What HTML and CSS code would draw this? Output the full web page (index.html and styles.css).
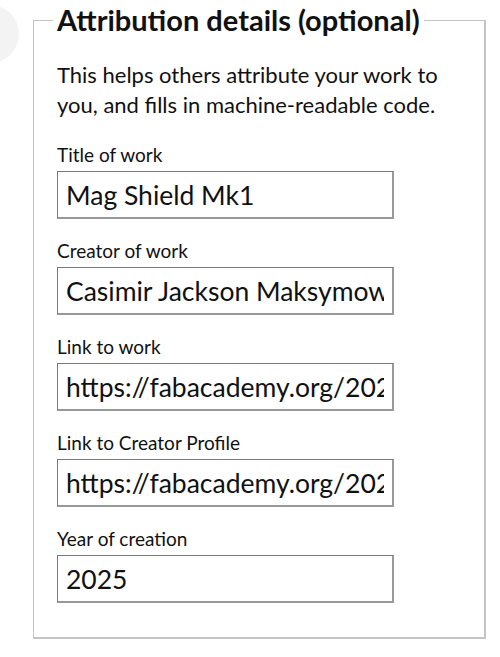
FILE: index.html
```html
<!DOCTYPE html>
<html lang="en">
<head>
    <meta charset="UTF-8">
    <meta name="viewport" content="width=device-width, initial-scale=1.0">
    <title>Attribution details</title>
    <link rel="stylesheet" href="styles.css">
</head>
<body>

    <div class="blob"></div>

    <form class="attribution">
        <fieldset>
            <legend>Attribution details (optional)</legend>

            <p class="hint">This helps others attribute your work to you, and fills in machine-readable code.</p>

            <div class="field">
                <label for="title">Title of work</label>
                <input type="text" id="title" value="Mag Shield Mk1">
            </div>

            <div class="field">
                <label for="creator">Creator of work</label>
                <input type="text" id="creator" value="Casimir Jackson Maksymowicz">
            </div>

            <div class="field">
                <label for="work_link">Link to work</label>
                <input type="text" id="work_link" value="https://fabacademy.org/2025/labs/">
            </div>

            <div class="field">
                <label for="profile_link">Link to Creator Profile</label>
                <input type="text" id="profile_link" value="https://fabacademy.org/2025/labs/">
            </div>

            <div class="field">
                <label for="year">Year of creation</label>
                <input type="text" id="year" value="2025">
            </div>
        </fieldset>
    </form>

</body>
</html>
```

FILE: styles.css
```css
body {
    font-family: Lato, "Noto Sans", sans-serif;
    margin: 0;
    padding: 0;
    background-color: white;
    color: #111;
}
.blob {
    position: absolute;
    left: -39px;
    top: 5px;
    width: 58px;
    height: 58px;
    border-radius: 50%;
    background-color: #f3f3f3;
}
.attribution {
    position: relative;
    padding: 0 14px 0 33px;
}
fieldset {
    width: 453px;
    box-sizing: border-box;
    margin: 0;
    padding: 0 23px 34px;
    border: 1px solid #c4c4c4;
    border-width: 1px 2px 2px 1px;
}
legend {
    font-size: 29px;
    font-weight: bold;
    line-height: 40px;
    padding: 0 4px;
    margin-left: -4px;
}
.hint {
    font-size: 22px;
    line-height: 30px;
    margin: 20px 0 23px;
}
.field + .field {
    margin-top: 20px;
}
label {
    display: block;
    font-size: 19px;
    line-height: 24px;
    margin-bottom: 4px;
}
input {
    display: block;
    width: 337px;
    height: 48px;
    box-sizing: border-box;
    margin: 0;
    padding: 0 8px;
    font-family: inherit;
    font-size: 26.5px;
    color: #111;
    border: 1px solid #7a7a7a;
    border-width: 1px 2px 2px 1px;
    border-right-color: #999;
    border-bottom-color: #999;
    background: white;
}
```
